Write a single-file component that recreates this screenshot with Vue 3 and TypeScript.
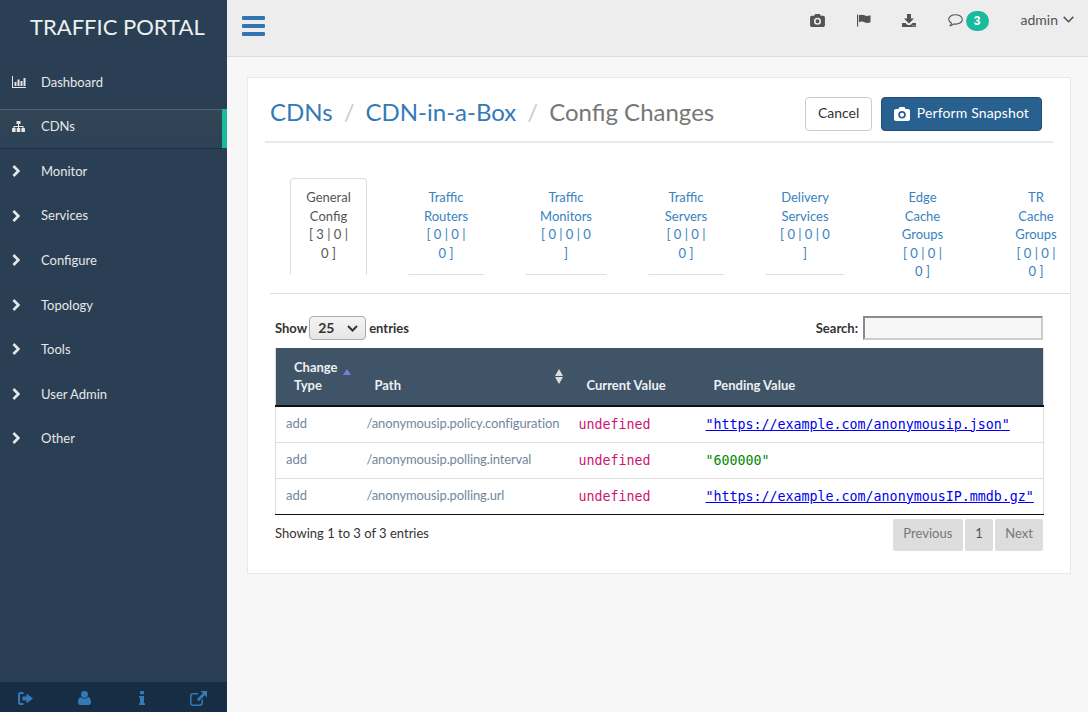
<script setup lang="ts">
import { ref } from 'vue'

interface MenuItem {
  label: string
  icon: 'chart' | 'sitemap' | 'chevron'
  active?: boolean
}

interface ChangeTab {
  label: string
  counts: string
  width: number
  active?: boolean
}

interface ChangeRow {
  type: string
  path: string
  pending: string
  link: boolean
}

const menu = ref<MenuItem[]>([
  { label: 'Dashboard', icon: 'chart' },
  { label: 'CDNs', icon: 'sitemap', active: true },
  { label: 'Monitor', icon: 'chevron' },
  { label: 'Services', icon: 'chevron' },
  { label: 'Configure', icon: 'chevron' },
  { label: 'Topology', icon: 'chevron' },
  { label: 'Tools', icon: 'chevron' },
  { label: 'User Admin', icon: 'chevron' },
  { label: 'Other', icon: 'chevron' }
])

const tabs = ref<ChangeTab[]>([
  { label: 'General Config', counts: '[ 3 | 0 | 0 ]', width: 77, active: true },
  { label: 'Traffic Routers', counts: '[ 0 | 0 | 0 ]', width: 76 },
  { label: 'Traffic Monitors', counts: '[ 0 | 0 | 0 ]', width: 82 },
  { label: 'Traffic Servers', counts: '[ 0 | 0 | 0 ]', width: 76 },
  { label: 'Delivery Services', counts: '[ 0 | 0 | 0 ]', width: 80 },
  { label: 'Edge Cache Groups', counts: '[ 0 | 0 | 0 ]', width: 73 },
  { label: 'TR Cache Groups', counts: '[ 0 | 0 | 0 ]', width: 72 }
])

const rows = ref<ChangeRow[]>([
  { type: 'add', path: '/anonymousip.policy.configuration', pending: '"https://example.com/anonymousip.json"', link: true },
  { type: 'add', path: '/anonymousip.polling.interval', pending: '"600000"', link: false },
  { type: 'add', path: '/anonymousip.polling.url', pending: '"https://example.com/anonymousIP.mmdb.gz"', link: true }
])
</script>

<template>
  <div class="layout">
    <!-- Sidebar -->
    <aside class="sidebar">
      <div class="brand">TRAFFIC PORTAL</div>
      <ul class="side-menu">
        <li v-for="item in menu" :key="item.label" class="side-item" :class="{ active: item.active }">
          <a class="side-link">
            <span class="side-icon">
              <svg v-if="item.icon === 'chart'" width="14" height="12" viewBox="0 0 14 12" fill="currentColor">
                <path d="M0 0h1v11h13v1H0z" />
                <path d="M2.5 6h2v4h-2zM5.5 3.5h2V10h-2zM8.5 5h2v5h-2zM11.5 2h2v8h-2z" />
              </svg>
              <svg v-else-if="item.icon === 'sitemap'" width="13" height="11" viewBox="0 0 13 11" fill="currentColor">
                <path d="M4.5 0h4v3h-4zM6 3h1v2h4.5v2h-1V6H7v1H6V6H2.5v1h-1V5H6z" />
                <rect x="0" y="7" width="3.6" height="4" rx=".6" />
                <rect x="4.7" y="7" width="3.6" height="4" rx=".6" />
                <rect x="9.4" y="7" width="3.6" height="4" rx=".6" />
              </svg>
              <svg v-else width="8" height="12" viewBox="0 0 8 12" fill="none" stroke="currentColor" stroke-width="2.6">
                <path d="M1.4 1l5 5-5 5" />
              </svg>
            </span>
            <span>{{ item.label }}</span>
          </a>
        </li>
      </ul>
      <footer class="side-footer">
        <a class="foot-icon">
          <svg width="15" height="13" viewBox="0 0 15 13" fill="currentColor">
            <path d="M5.500 0v2H2.600C2 2 2 2.500 2 3v7c0 .5.1 1 .6 1h2.900v2H2.400C1 13 0 12 0 10.500v-8C0 1 1 0 2.400 0z" />
            <path d="M8.500 1.500 15 6.500l-6.500 5V8.500H4.500v-4h4z" />
          </svg>
        </a>
        <a class="foot-icon foot-user">
          <svg width="13" height="14" viewBox="0 0 14 15" fill="currentColor">
            <circle cx="7" cy="3.700" r="3.700" />
            <path d="M3.200 6.500C4 7.500 5.400 8.200 7 8.200s3-.7 3.800-1.700C13 7 14 9 14 12c0 2-1 3-2.600 3H2.600C1 15 0 14 0 12c0-3 1-5 3.200-5.500z" />
          </svg>
        </a>
        <a class="foot-icon">
          <svg width="6" height="14" viewBox="0 0 6 14" fill="currentColor">
            <rect x="1" y="0" width="4" height="3.200" rx=".5" />
            <path d="M0 5h5v7.300h1V14H0v-1.700h1V6.700H0z" />
          </svg>
        </a>
        <a class="foot-icon">
          <svg width="17" height="15" viewBox="0 0 17 15" fill="none" stroke="currentColor">
            <path stroke-width="1.500" d="M8 2.700H3C1.700 2.700.8 3.600.8 5v6.800c0 1.400.9 2.400 2.200 2.400h7c1.300 0 2.200-1 2.200-2.400V8.500" />
            <path fill="currentColor" stroke="none" d="M10.500 0H17v6.500l-2.200-2.200-6 6-2-2 6-6z" />
          </svg>
        </a>
      </footer>
    </aside>

    <div class="main">
      <!-- Top bar -->
      <header class="topbar">
        <button class="menu-toggle" aria-label="Toggle menu">
          <span></span><span></span><span></span>
        </button>
        <nav class="top-actions">
          <a class="top-icon camera">
            <svg width="15" height="13" viewBox="0 0 16 14" fill="currentColor">
              <path fill-rule="evenodd" d="M5.500 0h5l1 2H14c1.200 0 2 .8 2 2v8c0 1.200-.8 2-2 2H2c-1.200 0-2-.8-2-2V4c0-1.200.8-2 2-2h2.500zM8 4a3.800 3.800 0 1 0 0 7.600A3.800 3.800 0 0 0 8 4zm0 1.700a2.100 2.100 0 1 1 0 4.200 2.100 2.100 0 0 1 0-4.200z" />
            </svg>
          </a>
          <a class="top-icon flag">
            <svg width="14" height="13" viewBox="0 0 15 13" fill="currentColor">
              <path d="M0 0h1.200v13H0z" />
              <path d="M2 1c2-1 4-1 6 0s3.500.8 6.500 0v7.300c-3 1-4.500 1-6.500 0s-4-1-6 0z" />
            </svg>
          </a>
          <a class="top-icon download">
            <svg width="14" height="13" viewBox="0 0 14 13" fill="currentColor">
              <path d="M5 0h4v4.500h3L7 9.500l-5-5h3z" />
              <path fill-rule="evenodd" d="M0 9h3.500L5.500 11h3L10.500 9H14v4H0zm10.500 2.300v.9h.9v-.9zm1.800 0v.9h.9v-.9z" />
            </svg>
          </a>
          <a class="top-icon comment">
            <svg width="15" height="13" viewBox="0 0 15 13" fill="none" stroke="currentColor" stroke-width="1.100">
              <path d="M7.500.7c3.700 0 6.800 2 6.800 4.700s-3.100 4.700-6.800 4.700c-.6 0-1.200 0-1.800-.2-1 .9-2.300 1.700-3.500 1.700.7-.8 1.200-1.700 1.300-2.600C1.900 8.100.7 6.800.7 5.400.7 2.700 3.800.7 7.500.7z" />
            </svg>
          </a>
          <span class="badge">3</span>
          <a class="user-menu">
            admin
            <svg width="11" height="7" viewBox="0 0 11 7" fill="none" stroke="currentColor" stroke-width="1.500">
              <path d="M.7.9l4.800 4.800L10.300.9" />
            </svg>
          </a>
        </nav>
      </header>

      <!-- Content -->
      <section class="content">
        <div class="panel">
          <div class="panel-title">
            <ol class="crumbs">
              <li><a>CDNs</a></li>
              <li class="sep">/</li>
              <li><a>CDN-in-a-Box</a></li>
              <li class="sep">/</li>
              <li class="current">Config Changes</li>
            </ol>
            <div class="title-actions">
              <button class="btn btn-cancel">Cancel</button>
              <button class="btn btn-primary">
                <svg width="16" height="14" viewBox="0 0 16 14" fill="currentColor">
                  <path fill-rule="evenodd" d="M5.500 0h5l1 2H14c1.200 0 2 .8 2 2v8c0 1.200-.8 2-2 2H2c-1.200 0-2-.8-2-2V4c0-1.200.8-2 2-2h2.500zM8 4a3.800 3.800 0 1 0 0 7.600A3.800 3.800 0 0 0 8 4zm0 1.700a2.100 2.100 0 1 1 0 4.200 2.100 2.100 0 0 1 0-4.200z" />
                </svg>
                Perform Snapshot
              </button>
            </div>
          </div>

          <ul class="tabs">
            <li v-for="tab in tabs" :key="tab.label" class="tab" :class="{ active: tab.active }" :style="{ width: tab.width + 'px' }">
              <span class="tab-label">{{ tab.label }}</span>
              <span class="tab-counts">{{ tab.counts }}</span>
            </li>
          </ul>

          <div class="table-tools">
            <label class="length">
              Show
              <span class="select">25
                <svg width="11" height="7" viewBox="0 0 11 7" fill="none" stroke="currentColor" stroke-width="2">
                  <path d="M1 1l4.500 4.500L10 1" />
                </svg>
              </span>
              entries
            </label>
            <label class="search">
              Search:
              <input type="text" />
            </label>
          </div>

          <table class="changes">
            <colgroup>
              <col class="col-type" />
              <col class="col-path" />
              <col class="col-current" />
              <col />
            </colgroup>
            <thead>
              <tr>
                <th class="sorted">Change Type<span class="sort-up"></span></th>
                <th class="sortable">Path<span class="sort-both"></span></th>
                <th>Current Value</th>
                <th>Pending Value</th>
              </tr>
            </thead>
            <tbody>
              <tr v-for="row in rows" :key="row.path">
                <td>{{ row.type }}</td>
                <td class="path">{{ row.path }}</td>
                <td class="mono undefined">undefined</td>
                <td class="mono">
                  <a v-if="row.link" class="value-link">{{ row.pending }}</a>
                  <span v-else class="value-string">{{ row.pending }}</span>
                </td>
              </tr>
            </tbody>
          </table>

          <div class="table-foot">
            <div class="info">Showing 1 to 3 of 3 entries</div>
            <div class="pager">
              <a class="page prev">Previous</a>
              <a class="page current-page">1</a>
              <a class="page">Next</a>
            </div>
          </div>
        </div>
      </section>
    </div>
  </div>
</template>

<style>
html,
body {
  margin: 0;
  background: #f7f7f7;
}
</style>

<style scoped>
.layout {
  display: flex;
  height: 712px;
  overflow: hidden;
  font-family: Lato, 'Liberation Sans', sans-serif;
  font-size: 13px;
  line-height: 1.42857;
  color: #333;
}

.sidebar {
  flex: 0 0 227px;
  display: flex;
  flex-direction: column;
  background: #2a3f54;
  color: #e7e7e7;
}

.brand {
  height: 64.700px;
  padding: 12px 0 0 30px;
  box-sizing: border-box;
  font-size: 22px;
  line-height: 30px;
  color: #ecf0f1;
}

.side-menu {
  flex: 1;
  margin: 0;
  padding: 0;
  list-style: none;
}

.side-item {
  margin-bottom: 6px;
}

.side-link {
  display: flex;
  align-items: center;
  height: 38.570px;
  padding: 0 0 4px 12px;
  box-sizing: border-box;
}

.side-icon {
  display: flex;
  justify-content: flex-start;
  width: 29px;
  color: #e7e7e7;
}

.side-item.active {
  border-right: 5px solid #1abb9c;
}

.side-item.active .side-link {
  background: linear-gradient(#334556, #2c4257);
  box-shadow: rgba(0, 0, 0, 0.25) 0 1px 0, inset rgba(255, 255, 255, 0.16) 0 1px 0;
}

.side-footer {
  flex: 0 0 30px;
  display: flex;
  justify-content: space-between;
  align-items: center;
  padding: 0 20px 0 18px;
  background: #172d44;
  color: #337ab7;
}

.foot-icon {
  display: flex;
  padding-top: 2px;
}

.foot-user {
  margin-right: 2px;
}

.main {
  flex: 1;
  display: flex;
  flex-direction: column;
  min-width: 0;
}

.topbar {
  flex: 0 0 57px;
  box-sizing: border-box;
  display: flex;
  justify-content: space-between;
  align-items: flex-start;
  background: #ededed;
  border-bottom: 1px solid #d9dee4;
}

.menu-toggle {
  display: flex;
  flex-direction: column;
  gap: 4px;
  width: 23px;
  margin: 16px 0 0 15px;
  padding: 0;
  border: none;
  background: none;
}

.menu-toggle span {
  display: block;
  height: 4px;
  border-radius: 1px;
  background: #3276b1;
}

.top-actions {
  display: flex;
  align-items: center;
  height: 40px;
  padding-right: 14px;
  color: #515356;
}

.top-icon {
  display: flex;
}

.camera {
  margin-right: 32px;
}

.flag {
  margin-right: 31px;
}

.download {
  margin-right: 32px;
}

.comment {
  margin-right: 3px;
}

.badge {
  width: 23px;
  height: 20px;
  margin-top: 2px;
  border-radius: 10px;
  background: #1abb9c;
  color: #fff;
  font-family: 'Liberation Sans', sans-serif;
  font-size: 12px;
  font-weight: 700;
  line-height: 20px;
  text-align: center;
}

.user-menu {
  display: flex;
  align-items: center;
  gap: 5px;
  margin-left: 32px;
  font-size: 14px;
}

.content {
  flex: 1;
  padding: 20px 17px 0 20px;
}

.panel {
  box-sizing: border-box;
  height: 497px;
  padding: 19px 17px 0;
  background: #fff;
  border: 1px solid #e6e9ed;
}

.panel-title {
  display: flex;
  justify-content: space-between;
  align-items: center;
  height: 44px;
  padding: 0 11px 0 5px;
  border-bottom: 2px solid #e6e9ed;
}

.crumbs {
  display: flex;
  margin: 0 0 15px;
  padding: 0;
  list-style: none;
  font-size: 24px;
  line-height: 32px;
}

.crumbs a {
  color: #337ab7;
}

.sep {
  padding: 0 11px;
  color: #ccc;
}

.current {
  color: #777;
}

.title-actions {
  display: flex;
  gap: 9px;
  margin-bottom: 10px;
}

.btn {
  display: flex;
  align-items: center;
  gap: 7px;
  height: 34px;
  box-sizing: border-box;
  border-radius: 4px;
  font-family: inherit;
  font-size: 14px;
  padding: 0 12px 3px;
  border: 1px solid #ccc;
}

.btn svg {
  margin-top: 3px;
}

.btn-cancel {
  padding: 0 11.500px 3px;
  background: #fff;
  color: #333;
}

.btn-primary {
  background: #286090;
  border-color: #204d74;
  color: #fff;
  letter-spacing: 0.13px;
}

.tabs {
  display: flex;
  align-items: flex-start;
  gap: 41px;
  height: 115px;
  margin: 35px -18px 0 5px;
  padding: 0 0 0 20px;
  border-bottom: 1px solid #ddd;
  list-style: none;
}

.tab {
  flex: none;
  box-sizing: border-box;
  padding: 9px 14px 12px;
  border: 1px solid transparent;
  border-bottom-color: #ddd;
  border-radius: 4px 4px 0 0;
  color: #3a82c0;
  text-align: center;
}

.tab-label,
.tab-counts {
  display: block;
}

.tab.active {
  border-color: #ddd;
  border-bottom-color: transparent;
  color: #555;
}

/* last tab only shows its line up to the end of the panel body */
.tab:last-child {
  position: relative;
  border-bottom-color: transparent;
}

.tab:last-child::after {
  content: '';
  position: absolute;
  left: -1px;
  bottom: -1px;
  width: 48px;
  height: 1px;
  background: #ddd;
}

.table-tools {
  display: flex;
  justify-content: space-between;
  align-items: center;
  height: 30px;
  margin: 19px 10px 0 10px;
  font-weight: 700;
}

.length,
.search {
  display: flex;
  align-items: center;
}

.select {
  display: flex;
  justify-content: space-between;
  align-items: center;
  box-sizing: border-box;
  width: 57px;
  height: 24px;
  margin: 0 3px 0 2px;
  padding: 0 7px 0 8px;
  border: 1px solid #aaa;
  border-radius: 4px;
  background: linear-gradient(#f4f4f4, #e6e6e6);
  font-size: 14px;
}

.search input {
  box-sizing: border-box;
  width: 180px;
  height: 24px;
  margin-left: 5px;
  padding: 0 4px;
  border-width: 2px;
  border-style: solid;
  border-color: #8a8a8a #ccc #ccc #8a8a8a;
  background: #f7f7f7;
}

.changes {
  box-sizing: border-box;
  width: 769px;
  margin: 5px 0 0 10px;
  border-collapse: collapse;
  table-layout: fixed;
  border-left: 1px solid #ddd;
  border-right: 1px solid #ddd;
  border-bottom: 1px solid #111;
}

.col-type {
  width: 81px;
}

.col-path {
  width: 212px;
}

.col-current {
  width: 127px;
}

.changes th {
  height: 58px;
  box-sizing: border-box;
  padding: 8px 18px 10px;
  background: #405467;
  border-bottom: 2px solid #111;
  color: #ecf0f1;
  font-weight: 700;
  text-align: left;
  vertical-align: bottom;
  position: relative;
}

.changes td {
  height: 36px;
  box-sizing: border-box;
  padding: 0 10px 2px;
  border-top: 1px solid #ddd;
  color: #73879c;
  white-space: nowrap;
}

.changes tr:first-child td {
  border-top: none;
}

.changes .path {
  letter-spacing: -0.12px;
}

.sort-up {
  position: absolute;
  top: 21px;
  right: 6px;
  width: 0;
  height: 0;
  border-left: 4px solid transparent;
  border-right: 4px solid transparent;
  border-bottom: 6px solid #7b7bd8;
}

.sort-both {
  position: absolute;
  top: 21px;
  right: 5px;
  width: 0;
  height: 15px;
  border-left: 4.500px solid transparent;
  border-right: 4.500px solid transparent;
}

.sort-both::before,
.sort-both::after {
  content: '';
  position: absolute;
  left: -4.500px;
  width: 0;
  height: 0;
  border-left: 4.500px solid transparent;
  border-right: 4.500px solid transparent;
}

.sort-both::before {
  top: 0;
  border-bottom: 7px solid #ddd;
}

.sort-both::after {
  bottom: 0;
  border-top: 7px solid #ddd;
}

.changes .mono {
  padding: 2px 10px 0;
  font-family: 'DejaVu Sans Mono', monospace;
  font-size: 13.300px;
}

.changes .undefined {
  color: #d01274;
}

.value-link {
  color: #00e;
  text-decoration: underline;
}

.value-string {
  color: #008a00;
}

.table-foot {
  display: flex;
  justify-content: space-between;
  align-items: flex-start;
  margin: 4px 10px 0;
}

.info {
  padding-top: 5px;
}

.pager {
  display: flex;
  gap: 2px;
}

.page {
  box-sizing: border-box;
  height: 32px;
  padding: 0 10px;
  border-radius: 2px;
  background: #ddd;
  color: #777;
  line-height: 29px;
}

.prev {
  padding: 0 10.500px;
}

.current-page {
  padding: 0 10.500px;
  color: #555;
}
</style>
